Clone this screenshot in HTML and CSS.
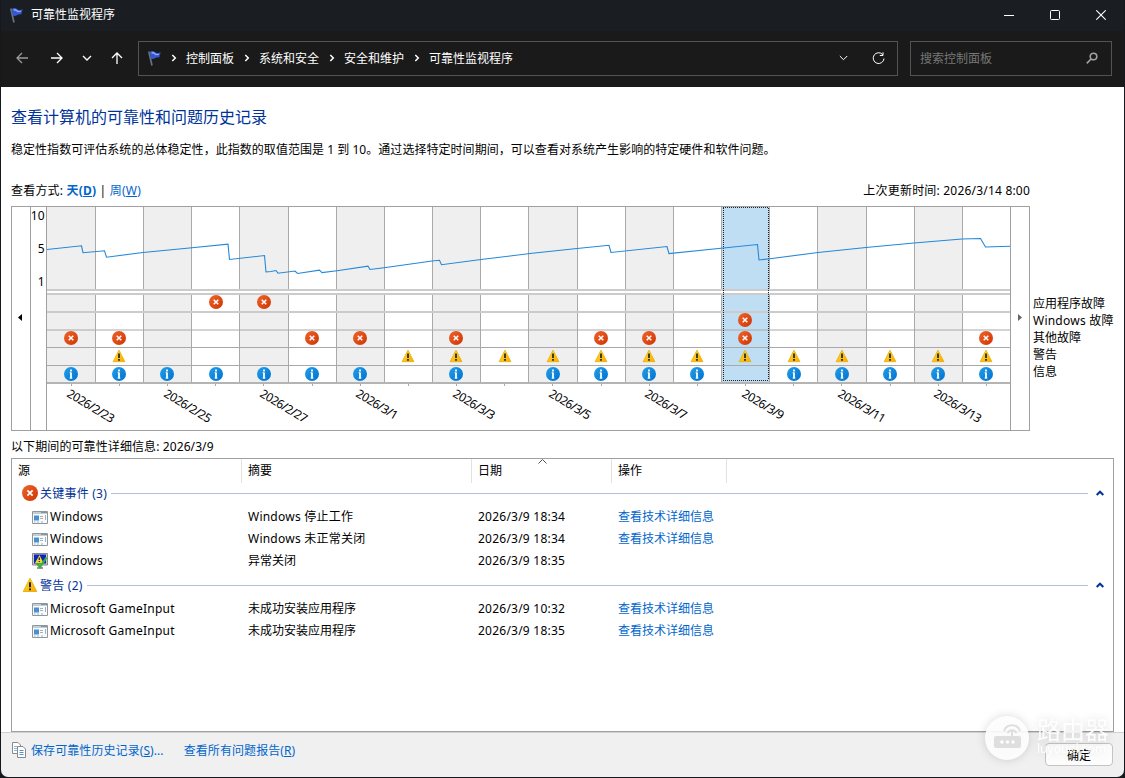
FILE: index.html
```html
<!DOCTYPE html>
<html lang="zh-CN">
  <head>
    <meta charset="UTF-8" />
    <meta name="viewport" content="width=device-width, initial-scale=1.0" />
    <title>可靠性监视程序</title>
    <link rel="stylesheet" href="styles.css">
  </head>
  <body>
    <!-- Shared icons -->
    <svg class="defs" width="0" height="0">
      <defs>
        <linearGradient id="red" x1="0" y1="0" x2="1" y2="1">
          <stop offset="0" stop-color="#f0642a" />
          <stop offset="1" stop-color="#cf3404" />
        </linearGradient>
        <linearGradient id="blue" x1="0" y1="0" x2="1" y2="1">
          <stop offset="0" stop-color="#22a0e8" />
          <stop offset="1" stop-color="#0070d0" />
        </linearGradient>
        <linearGradient id="yellow" x1="0" y1="0" x2="1" y2="1">
          <stop offset="0" stop-color="#ffe23a" />
          <stop offset="1" stop-color="#f8a800" />
        </linearGradient>
        <symbol id="error" viewBox="0 0 14 14">
          <circle cx="7" cy="7" r="7" fill="url(#red)" />
          <path d="M4.7 4.7l4.6 4.6M9.3 4.7L4.7 9.3" stroke="#fff" stroke-width="1.5" />
        </symbol>
        <symbol id="warning" viewBox="0 0 14 14">
          <path d="M7 1.1L12.9 12.7H1.1z" fill="url(#yellow)" stroke="#e9b000" stroke-width=".8" stroke-linejoin="round" />
          <path d="M7 4.6v4.4M7 10v1.7" stroke="#222" stroke-width="1.7" />
        </symbol>
        <symbol id="info" viewBox="0 0 14 14">
          <circle cx="7" cy="7" r="7" fill="url(#blue)" />
          <path d="M7 2.4v2M7 5.4v6" stroke="#fff" stroke-width="1.8" />
          <path d="M5.6 5.8H7M5.6 11h2.8" stroke="#fff" stroke-width=".9" />
        </symbol>
        <symbol id="flag" viewBox="0 0 16 17">
          <path d="M1.8 1.5l3.2 14" stroke="#65727b" stroke-width="1.7" />
          <path d="M2.5 2.2C5 .2 7 1.2 8.6 2.6c1.8.7 3 .2 5.6-.2-1.3 1.5-1.7 2.6-1.7 5.1C9.5 6.6 8 9.5 4.3 9z" fill="#3557cf" />
          <path d="M4.5 3c2-.9 3.2.3 4.4 1.6l3-.3" stroke="#94aaf2" stroke-width="1.3" fill="none" />
        </symbol>
        <symbol id="app" viewBox="0 0 16 13">
          <path d="M.5.5h15v12H.5z" fill="#f8fafb" stroke="#8c989f" />
          <path d="M1 2h14" stroke="#c4cdd3" stroke-width="2" />
          <path d="M9.5 1.5h1M11.5 1.5h1M13.5 1.5h1" stroke="#4c5860" />
          <path d="M2 4.500h5v5H2z" fill="#4a90cc" />
          <path d="M8 5.500h3M8 7.500h3M2 11h1.500M5 11h2M9 11h2M13.500 4v5" stroke="#a4b0b9" />
        </symbol>
        <symbol id="monitor" viewBox="0 0 16 16">
          <path d="M.5.5h15v11.5H.5z" fill="#c6c8c2" stroke="#888" />
          <path d="M2 1.500h12v9H2z" fill="#0a25c4" />
          <path d="M5 15h6M8 12v3" stroke="#999" stroke-width="2" />
          <path d="M7.500 2L11.500 10H3z" fill="#f5d920" />
          <path d="M7.300 4.500v2.600M7.300 8v1" stroke="#222" stroke-width="1.200" />
          <path d="M5 10.500l3 3.500 6.500-9.500" stroke="#31b437" stroke-width="2.200" fill="none" />
        </symbol>
        <symbol id="chevron" viewBox="0 0 6 8">
          <path d="M1.3 1L4.3 4l-3 3" stroke="#fff" stroke-width="1.5" fill="none" />
        </symbol>
        <symbol id="collapse" viewBox="0 0 8 6">
          <path d="M.7 5L4 1.7 7.3 5" stroke="#003399" stroke-width="2" fill="none" />
        </symbol>
      </defs>
    </svg>

    <div class="window">
      <div class="titlebar">
        <svg class="flag" width="16" height="17"><use href="#flag" /></svg>
        <span class="window-title">可靠性监视程序</span>
        <div class="controls">
          <svg width="10" height="10"><path d="M0 5.5h10" stroke="#fff" /></svg>
          <svg width="10" height="10"><rect x=".5" y=".5" width="9" height="9" rx="1" fill="none" stroke="#fff" /></svg>
          <svg width="10" height="10"><path d="M.3.3l9.4 9.4M9.7.3L.3 9.7" stroke="#fff" stroke-width="1.1" /></svg>
        </div>
      </div>

      <div class="navbar">
        <div class="nav-buttons">
          <svg width="12" height="12" stroke="#9a9a9a"><path d="M12 6H1M6 1L1 6l5 5" /></svg>
          <svg width="12" height="12" stroke="#fff"><path d="M0 6h11M6 1l5 5-5 5" /></svg>
          <svg width="10" height="6" stroke="#fff"><path d="M1 1l4 4 4-4" /></svg>
          <svg width="12" height="12" stroke="#fff"><path d="M6 12V1M1 6l5-5 5 5" /></svg>
        </div>
        <div class="address">
          <svg class="flag" width="16" height="17"><use href="#flag" /></svg>
          <svg class="sep" width="6" height="8"><use href="#chevron" /></svg>
          <span>控制面板</span>
          <svg class="sep" width="6" height="8"><use href="#chevron" /></svg>
          <span>系统和安全</span>
          <svg class="sep" width="6" height="8"><use href="#chevron" /></svg>
          <span>安全和维护</span>
          <svg class="sep" width="6" height="8"><use href="#chevron" /></svg>
          <span>可靠性监视程序</span>
          <div class="address-tools">
            <svg width="9" height="6" stroke="#fff"><path d="M.8 1l3.7 3.7L8.2 1" /></svg>
            <svg width="13" height="13" stroke="#fff"><path d="M10.700 2.600A5.400 5.400 0 1 0 12 6.500M11 .300v3.200H7.800" /></svg>
          </div>
        </div>
        <div class="search">
          <span>搜索控制面板</span>
          <svg width="12" height="12" fill="none" stroke="#a0a0a0"><circle cx="7.5" cy="4.500" r="3.300" stroke-width="1.600" /><path d="M5 7L.8 11.300" stroke-width="1.700" /></svg>
        </div>
      </div>

      <div class="content">
        <h1>查看计算机的可靠性和问题历史记录</h1>
        <p class="intro">稳定性指数可评估系统的总体稳定性，此指数的取值范围是 1 到 10。通过选择特定时间期间，可以查看对系统产生影响的特定硬件和软件问题。</p>

        <div class="view-row">
          <div>查看方式: <a class="current" href="#">天(<u>D</u>)</a> | <a href="#">周(<u>W</u>)</a></div>
          <div>上次更新时间: 2026/3/14 8:00</div>
        </div>

        <div class="chart-row">
          <svg id="chart" width="1019" height="225" viewBox="11 206 1019 225"></svg>
          <ul class="legend">
            <li>应用程序故障</li>
            <li class="wide">Windows 故障</li>
            <li>其他故障</li>
            <li>警告</li>
            <li>信息</li>
          </ul>
        </div>

        <div class="caption">以下期间的可靠性详细信息: 2026/3/9</div>

        <div class="details">
          <div class="row head">
            <span>源</span>
            <span>摘要</span>
            <span>日期<svg class="sort" width="9" height="5"><path d="M.5 4.5l4-4 4 4" stroke="#555" fill="none" /></svg></span>
            <span>操作</span>
          </div>
          <div class="group">
            <svg width="16" height="16"><use href="#error" /></svg>
            <span>关键事件 (3)</span>
            <i></i>
            <svg width="8" height="6"><use href="#collapse" /></svg>
          </div>
          <div class="row">
            <span class="wide"><svg width="16" height="13"><use href="#app" /></svg>Windows</span>
            <span class="wide">Windows 停止工作</span>
            <span class="wide">2026/3/9 18:34</span>
            <span><a href="#">查看技术详细信息</a></span>
          </div>
          <div class="row">
            <span class="wide"><svg width="16" height="13"><use href="#app" /></svg>Windows</span>
            <span class="wide">Windows 未正常关闭</span>
            <span class="wide">2026/3/9 18:34</span>
            <span><a href="#">查看技术详细信息</a></span>
          </div>
          <div class="row">
            <span class="wide"><svg width="16" height="16"><use href="#monitor" /></svg>Windows</span>
            <span>异常关闭</span>
            <span class="wide">2026/3/9 18:35</span>
            <span></span>
          </div>
          <div class="group second">
            <svg width="16" height="16"><use href="#warning" /></svg>
            <span>警告 (2)</span>
            <i></i>
            <svg width="8" height="6"><use href="#collapse" /></svg>
          </div>
          <div class="row">
            <span class="wide"><svg width="16" height="13"><use href="#app" /></svg>Microsoft GameInput</span>
            <span>未成功安装应用程序</span>
            <span class="wide">2026/3/9 10:32</span>
            <span><a href="#">查看技术详细信息</a></span>
          </div>
          <div class="row">
            <span class="wide"><svg width="16" height="13"><use href="#app" /></svg>Microsoft GameInput</span>
            <span>未成功安装应用程序</span>
            <span class="wide">2026/3/9 18:35</span>
            <span><a href="#">查看技术详细信息</a></span>
          </div>
        </div>
      </div>

      <div class="footer">
        <svg width="14" height="16" fill="#fff" stroke="#8a8a8a">
          <path d="M.5.5h5.500l2.500 2.500v8.500h-8z" />
          <path d="M2 4.500h4M2 6.500h4M2 8.500h4" stroke="#8db5e0" />
          <path d="M5.500 4.500h5.500l2.500 2.500v8.500h-8z" />
          <path d="M7.500 8.500h4M7.500 10.500h4M7.500 12.500h4" stroke="#4b92df" />
        </svg>
        <a href="#">保存可靠性历史记录(<u>S</u>)...</a>
        <a href="#">查看所有问题报告(<u>R</u>)</a>
        <button class="ok">确定</button>
      </div>

      <div class="watermark">
        <svg width="44" height="44">
          <circle cx="22" cy="22" r="22" fill="#fff" fill-opacity=".9" />
          <rect x="9" y="20" width="27" height="12" rx="2" fill="#dedede" />
          <path d="M27 20v-6M19 15a8.500 8.500 0 0 1 16 0M22.500 17a5 5 0 0 1 9 0" fill="none" stroke="#dedede" stroke-width="2" />
          <g fill="#fff"><circle cx="17" cy="26" r="1.7" /><circle cx="22.500" cy="26" r="1.7" /><circle cx="28" cy="26" r="1.7" /></g>
        </svg>
        <div>
          <div class="mark-name">路由器</div>
          <div class="mark-url">luyouqi.com</div>
        </div>
      </div>
    </div>

    <script>
      const left = 47.2;
      const step = 48.17;
      const days = 20;
      const selected = 14;

      // day indexes that have an icon, one list per row
      const events = [
        { icon: "error", y: 302, days: [3, 4] },
        { icon: "error", y: 320, days: [14] },
        { icon: "error", y: 338, days: [0, 1, 5, 6, 8, 11, 12, 14, 19] },
        { icon: "warning", y: 356, days: [1, 7, 8, 9, 10, 11, 12, 13, 14, 15, 16, 17, 18, 19] },
        { icon: "info", y: 374, days: [0, 1, 2, 3, 4, 5, 6, 8, 10, 11, 12, 13, 15, 16, 17, 18, 19] },
      ];
      const labels = ["2026/2/23", "2026/2/25", "2026/2/27", "2026/3/1", "2026/3/3",
        "2026/3/5", "2026/3/7", "2026/3/9", "2026/3/11", "2026/3/13"];
      const stability = "47,249.5 81.5,245.8 83,252.7 104.5,250.8 106.5,257.2 143,252.5 192,247.7 228,244.2 229.5,259.5 264.5,255.5 266,272 271,271.5 276,270.5 278,273.2 295,271 297.5,273.5 319.5,270.2 322,272.6 337,270.7 368,266.2 370,269.5 384,267.7 432,261 439.5,260.3 441.5,264.7 481,259.5 530,253.5 577,248.5 609,245.3 611,252.5 667,246.5 669,253.6 721,248.2 757.5,244.5 759,260 770,258.7 818,252.5 866,247.5 914,243 962,239 980.5,238.5 985.5,247 1010,246.2";

      let out = '<rect x="11.5" y="206.5" width="1018" height="224" class="frame" />';

      for (let i = 0; i < days; i++) {
        const x = Math.floor(left + i * step);
        const next = Math.floor(left + (i + 1) * step);
        if (i % 2 === 0) {
          const cls = i === selected ? "band selected" : "band";
          out += `<rect x="${x}" y="207" width="${next - x}" height="175" class="${cls}" />`;
        }
        if (i > 0) out += `<path d="M${x + 0.5} 207V382" class="line" />`;
        out += `<path d="M${Math.round(x + 24) + 0.5} 382v4" class="line" />`;
      }

      out += '<rect x="47" y="291" width="963" height="2" fill="#fff" />';
      out += '<path d="M47 290H1010M47 294H1010M47 312H1010" class="soft" />';
      out += '<path d="M47 330H1010M47 347.5H1010M47 365.5H1010" class="line" />';
      out += '<path d="M47 383H1010" class="axis" />';
      out += '<path d="M30.5 207V430M46.5 207V430M1010.5 207V430" class="frame" />';
      out += '<path d="M723 207.5H769M723 380.5H769M723.5 208V380M768.5 208V380" class="focus" />';
      out += `<polyline points="${stability}" class="stability" />`;

      for (const row of events) {
        for (const day of row.days) {
          const x = Math.round(left + (day + 0.5) * step - 0.2) - 7;
          out += `<use href="#${row.icon}" x="${x}" y="${row.y - 7}" width="14" height="14" />`;
        }
      }

      labels.forEach((text, i) => {
        const x = Math.round(left + (i * 2 + 0.5) * step);
        out += `<text transform="translate(${x - 5} 396) rotate(31)" class="date">${text}</text>`;
      });

      out += '<text x="44.5" y="220" class="scale">10</text><text x="44.5" y="253" class="scale">5</text><text x="44.5" y="286" class="scale">1</text>';
      out += '<path d="M22 314v7l-4-3.5z" fill="#000" /><path d="M1018 314v7l4-3.5z" fill="#666" />';

      document.getElementById("chart").innerHTML = out;
    </script>
  </body>
</html>
```
FILE: styles.css
```css
* {
  box-sizing: border-box;
}

body {
  margin: 0;
  background: #15181c;
  font-family: "Noto Sans", "Noto Sans CJK SC", sans-serif;
  font-size: 12px;
  color: #000;
}

a {
  color: #0066cc;
  text-decoration: none;
}

svg {
  flex: none;
}

.defs {
  position: absolute;
}

.wide {
  letter-spacing: 0.23px;
}

/* Window frame */
.window {
  position: relative;
  display: flex;
  flex-direction: column;
  width: 1125px;
  height: 778px;
  padding: 0 1px 1px;
  background: #15181c;
  overflow: hidden;
}

.titlebar {
  display: flex;
  align-items: center;
  height: 31px;
  padding: 0 18px 1px 8px;
  background: #1a1e23;
  color: #fff;
}

.window-title {
  margin-left: 6px;
  line-height: 29px;
  height: 30px;
}

.controls {
  display: flex;
  gap: 36px;
  margin-left: auto;
}

.navbar {
  display: flex;
  align-items: center;
  height: 56px;
  padding: 0 12px 2px 15px;
  background: #1a1a1a;
  color: #fff;
}

.nav-buttons {
  display: flex;
  align-items: center;
  width: 122px;
  gap: 23px;
  fill: none;
}

.nav-buttons svg {
  stroke-width: 1.3;
}

.nav-buttons svg:nth-child(3) {
  margin: 0 -4px;
}

.address {
  display: flex;
  align-items: center;
  width: 760px;
  height: 35px;
  padding: 0 12px 0 8px;
  border: 1px solid #535353;
}

.address .sep {
  margin: 0 9px 0 10px;
}

.address .flag + .sep {
  margin-left: 8px;
}

.address-tools {
  display: flex;
  align-items: center;
  gap: 24px;
  margin-left: auto;
  fill: none;
}

.search {
  display: flex;
  align-items: center;
  justify-content: space-between;
  width: 202px;
  height: 35px;
  margin-left: 12px;
  padding: 0 13px 0 9px;
  border: 1px solid #535353;
  color: #777;
}

/* Page content */
.content {
  flex: 1;
  padding: 0 10px;
  background: #fff;
}

h1 {
  margin: 18px 0 0;
  color: #003399;
  font-size: 16px;
  font-weight: 400;
  line-height: 24px;
}

.intro {
  margin: 12px 0 0;
  line-height: 18px;
  letter-spacing: 0.04px;
}

.view-row {
  display: flex;
  justify-content: space-between;
  width: 1019px;
  margin-top: 23px;
  line-height: 18px;
  letter-spacing: 0.2px;
}

.current {
  font-weight: 700;
}

.chart-row {
  display: flex;
  margin-top: 6px;
}

.legend {
  margin: 89px 0 0 3px;
  padding: 0;
  list-style: none;
  line-height: 17px;
  white-space: nowrap;
}

.band {
  fill: #efefef;
}

.band.selected {
  fill: #bfdef4;
}

.frame {
  fill: none;
  stroke: #a0a0a0;
}

.line {
  stroke: #a9a9a9;
}

.soft {
  stroke: #cbcbcb;
  stroke-width: 2;
}

.axis {
  stroke: #b4b4b4;
  stroke-width: 2;
}

.focus {
  fill: none;
  stroke: #222;
  stroke-dasharray: 1 1;
}

.stability {
  fill: none;
  stroke: #2488d8;
  stroke-width: 1.1;
}

.scale {
  text-anchor: end;
}

.date {
  letter-spacing: -0.5px;
}

/* Details list */
.caption {
  margin-top: 7px;
  height: 20px;
  line-height: 18px;
  letter-spacing: 0.1px;
}

.details {
  height: 274px;
  border: 1px solid #a0a0a0;
}

.row {
  display: grid;
  grid-template-columns: 230px 230px 140px 115px;
  height: 22px;
  line-height: 22px;
}

.row span {
  display: flex;
  align-items: center;
  padding-left: 6px;
  white-space: nowrap;
}

.row:not(.head) span:first-child {
  gap: 2px;
  padding-left: 20px;
}

.head {
  height: 24px;
  line-height: 24px;
}

.head span {
  position: relative;
  border-right: 1px solid #e2e2e2;
}

.sort {
  position: absolute;
  top: 0;
  left: 66px;
}

.group {
  display: flex;
  align-items: center;
  height: 23px;
  padding: 0 9px 3px 10px;
  color: #003399;
}

.group.second {
  height: 26px;
  padding-bottom: 0;
}

.group span {
  margin: 0 4px 0 2px;
  letter-spacing: 0.23px;
}

.group i {
  flex: 1;
  height: 1px;
  margin-right: 8px;
  background: #b2c0e0;
}

/* Bottom bar */
.footer {
  display: flex;
  align-items: center;
  height: 45px;
  padding: 0 11px 10px 11px;
  border-top: 1px solid #d0d0d0;
  border-radius: 0 0 7px 7px;
  background: #f0f0f0;
}

.footer a {
  margin: 0 15px 0 5px;
  letter-spacing: 0.08px;
}

.ok {
  width: 68px;
  height: 23px;
  margin: 9px 0 0 auto;
  padding: 0;
  border: 1px solid #c4c4c4;
  border-radius: 4px;
  background: #fdfdfd;
  font: inherit;
}

.watermark {
  position: absolute;
  left: 985px;
  top: 716px;
  display: flex;
  gap: 8px;
  color: rgba(255, 255, 255, 0.9);
  filter: drop-shadow(0 0 5px rgba(0, 0, 0, 0.16));
  pointer-events: none;
}

.mark-name {
  font-size: 24px;
  line-height: 27px;
}

.mark-url {
  font-size: 12px;
  line-height: 12px;
}
```
